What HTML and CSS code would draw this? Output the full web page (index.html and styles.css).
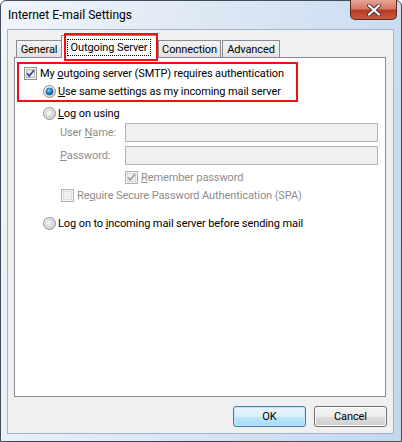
FILE: index.html
```html
<!DOCTYPE html>
<html>
<head>
<meta charset="utf-8">
<link rel="stylesheet" href="styles.css">
</head>
<body>
<svg class="defs" width="0" height="0">
  <defs>
    <linearGradient id="boxfill" x1="0" y1="0" x2="1" y2="1">
      <stop offset="0" stop-color="#dcdcdc"/>
      <stop offset="1" stop-color="#fbfbfb"/>
    </linearGradient>
    <radialGradient id="radfill" cx="0.35" cy="0.35" r="0.8">
      <stop offset="0" stop-color="#fafafa"/>
      <stop offset="1" stop-color="#d4d4d4"/>
    </radialGradient>
    <radialGradient id="dotfill" cx="0.4" cy="0.35" r="0.7">
      <stop offset="0" stop-color="#8fd3ff"/>
      <stop offset="0.5" stop-color="#1e86d6"/>
      <stop offset="1" stop-color="#0b4f91"/>
    </radialGradient>
  </defs>
</svg>
<div class="window">
  <div class="titlebar">
    <span class="title">Internet E-mail Settings</span>
    <div class="close">
      <svg width="16" height="12" viewBox="0 0 16 12"><path d="M3 1.5 L13 10.5 M13 1.5 L3 10.5" stroke="#4a3030" stroke-width="4" stroke-linecap="round"/><path d="M3 1.5 L13 10.5 M13 1.5 L3 10.5" stroke="#ffffff" stroke-width="2.2" stroke-linecap="round"/></svg>
    </div>
  </div>
  <div class="client">
    <div class="tabs">
      <div class="tablist">
        <div class="tab tab-general">General</div>
        <div class="tab active"><span class="focus">Outgoing Server</span><span class="mark"></span></div>
        <div class="tab tab-conn">Connection</div>
        <div class="tab tab-adv">Advanced</div>
      </div>
      <div class="panel">
        <div class="highlight">
          <div class="row">
            <svg class="ctl" width="13" height="13" viewBox="0 0 13 13"><rect x="0.5" y="0.5" width="12" height="12" fill="#f6f6f6" stroke="#8e8f8f"/><rect x="2.5" y="2.5" width="8" height="8" fill="url(#boxfill)" stroke="#b4b9c1"/><path d="M3.2 6.4 L5.3 9 L9.9 3.2" fill="none" stroke="#3d4f8f" stroke-width="1.8"/></svg>
            <span class="lbl">My <u>o</u>utgoing server (SMTP) requires authentication</span>
          </div>
          <div class="row sub">
            <svg class="ctl" width="13" height="13" viewBox="0 0 13 13"><circle cx="6.5" cy="6.5" r="6" fill="url(#radfill)" stroke="#8b8f94"/><circle cx="6.5" cy="6.5" r="3.6" fill="url(#dotfill)" stroke="#1a4f7f" stroke-width="0.6"/></svg>
            <span class="lbl"><u>U</u>se same settings as my incoming mail server</span>
          </div>
        </div>
        <div class="row sub logon">
          <svg class="ctl" width="13" height="13" viewBox="0 0 13 13"><circle cx="6.5" cy="6.5" r="6" fill="url(#radfill)" stroke="#8b8f94"/><circle cx="6.5" cy="6.5" r="3.8" fill="url(#radfill)" stroke="#c2c4c7" stroke-width="0.8"/></svg>
          <span class="lbl"><u>L</u>og on using</span>
        </div>
        <div class="field first">
          <span class="flabel">User <u>N</u>ame:</span>
          <div class="input"></div>
        </div>
        <div class="field">
          <span class="flabel"><u>P</u>assword:</span>
          <div class="input"></div>
        </div>
        <div class="row remember">
          <svg class="ctl" width="13" height="13" viewBox="0 0 13 13"><rect x="0.5" y="0.5" width="12" height="12" fill="#f4f4f4" stroke="#b1b1b1"/><rect x="2.5" y="2.5" width="8" height="8" fill="#f0f0f0" stroke="#d4d4d4"/><path d="M3.2 6.4 L5.3 9 L9.9 3.2" fill="none" stroke="#a2a2a2" stroke-width="1.8"/></svg>
          <span class="lbl dis"><u>R</u>emember password</span>
        </div>
        <div class="row spa">
          <svg class="ctl" width="13" height="13" viewBox="0 0 13 13"><rect x="0.5" y="0.5" width="12" height="12" fill="#f4f4f4" stroke="#b1b1b1"/><rect x="2.5" y="2.5" width="8" height="8" fill="#f0f0f0" stroke="#dcdcdc"/></svg>
          <span class="lbl dis">Re<u>q</u>uire Secure Password Authentication (SPA)</span>
        </div>
        <div class="row sub incoming">
          <svg class="ctl" width="13" height="13" viewBox="0 0 13 13"><circle cx="6.5" cy="6.5" r="6" fill="url(#radfill)" stroke="#8b8f94"/><circle cx="6.5" cy="6.5" r="3.8" fill="url(#radfill)" stroke="#c2c4c7" stroke-width="0.8"/></svg>
          <span class="lbl">Log on to <u>i</u>ncoming mail server before sending mail</span>
        </div>
      </div>
    </div>
    <div class="buttons">
      <div class="btn default">OK</div>
      <div class="btn">Cancel</div>
    </div>
  </div>
</div>
</body>
</html>
```

FILE: styles.css
```css
html, body {
  margin: 0;
  padding: 0;
  background: #ffffff;
}
.defs {
  position: absolute;
  width: 0;
  height: 0;
}
.window {
  width: 402px;
  height: 442px;
  box-sizing: border-box;
  border: 1px solid #3f4c5c;
  border-radius: 6px 6px 0 0;
  background: linear-gradient(100deg, #f1f5fa 0%, #dfe9f5 40%, #c3d8ee 100%);
  display: flex;
  flex-direction: column;
  font-family: Roboto, "Liberation Sans", sans-serif;
  font-size: 11px;
  letter-spacing: -0.1px;
  color: #000;
}
.titlebar {
  height: 28px;
  display: flex;
  align-items: flex-start;
  flex-shrink: 0;
}
.title {
  margin-left: 7px;
  margin-top: 7px;
  font-size: 12px;
  letter-spacing: 0;
  color: #000;
}
.close {
  margin-left: auto;
  margin-right: 4px;
  margin-top: -1px;
  width: 47px;
  height: 20px;
  box-sizing: border-box;
  border: 1px solid #5c2a22;
  border-top: none;
  border-radius: 0 0 5px 5px;
  background: linear-gradient(#e5a494 0%, #d47a66 45%, #b83a22 55%, #c75a3c 100%);
  display: flex;
  align-items: center;
  justify-content: center;
}
.client {
  flex: 1;
  margin: 0 7px 7px 6px;
  border: 1px solid #9fb3ca;
  background: #f0f0f0;
  display: flex;
  flex-direction: column;
}
.tabs {
  margin: 5px 7px 0 6px;
  flex: 1;
  display: flex;
  flex-direction: column;
}
.tablist {
  height: 22px;
  display: flex;
  align-items: flex-end;
  padding-left: 2px;
  position: relative;
  z-index: 1;
}
.tab {
  height: 17px;
  box-sizing: border-box;
  border: 1px solid #898c95;
  border-bottom: none;
  background: linear-gradient(#f3f3f3, #e2e2e2);
  display: flex;
  align-items: center;
  justify-content: center;
  color: #000;
  margin-right: -1px;
}
.tab-general { width: 46px; }
.tab-conn { width: 63px; margin-left: 2px; }
.tab-adv { width: 58px; margin-left: 2px; }
.tab.active {
  width: 96px;
  height: 23px;
  margin-bottom: -1px;
  background: #ffffff;
  position: relative;
}
.focus {
  border: 1px dotted #000;
  padding: 1px 3px;
  line-height: 13px;
}
.mark {
  position: absolute;
  left: 2px;
  top: -3px;
  width: 94px;
  height: 28px;
  box-sizing: border-box;
  border: 2px solid #ee1111;
}
.panel {
  height: 340px;
  box-sizing: border-box;
  border: 1px solid #898c95;
  background: #ffffff;
  display: flex;
  flex-direction: column;
  align-items: flex-start;
}
.highlight {
  margin: 4px 0 0 2px;
  border: 2px solid #ee1111;
  padding: 1px 6px 0 5px;
  width: 281px;
  box-sizing: border-box;
  height: 40px;
  display: flex;
  flex-direction: column;
  gap: 1px;
}
.row {
  height: 17px;
  display: flex;
  align-items: center;
  white-space: nowrap;
}
.ctl {
  flex-shrink: 0;
  margin-right: 3px;
}
.row.sub .ctl {
  margin-right: 2px;
}
.highlight .row.sub {
  padding-left: 19px;
}
.logon {
  margin-top: 2px;
  height: 18px;
  padding-left: 28px;
}
.field {
  display: flex;
  align-items: center;
  margin-top: 4px;
  padding-left: 45px;
}
.field.first {
  margin-top: 1px;
}
.flabel {
  width: 65px;
  color: #8d8d8d;
}
.input {
  width: 253px;
  height: 19px;
  box-sizing: border-box;
  border: 1px solid #adb5bf;
  background: #f0f0f0;
}
.remember {
  margin-top: 3px;
  height: 18px;
  padding-left: 110px;
}
.spa {
  height: 19px;
  padding-left: 46px;
}
.incoming {
  margin-top: 9px;
  height: 18px;
  padding-left: 28px;
}
.dis {
  color: #8d8d8d;
}
.buttons {
  display: flex;
  justify-content: flex-end;
  gap: 8px;
  padding: 9px 6px 6px 0;
}
.btn {
  width: 73px;
  height: 21px;
  box-sizing: border-box;
  border: 1px solid #707070;
  border-radius: 3px;
  background: linear-gradient(#f4f4f4 0%, #ebebeb 50%, #dddddd 51%, #cfcfcf 100%);
  display: flex;
  align-items: center;
  justify-content: center;
  color: #000;
  box-shadow: inset 0 0 0 1px #fbfbfb;
}
.btn.default {
  border-color: #3c7fb1;
  background: linear-gradient(#eaf6fd 0%, #d9f0fc 50%, #bee6fd 51%, #a7d9f5 100%);
  box-shadow: inset 0 0 0 1px #c6e6f8;
}
```
